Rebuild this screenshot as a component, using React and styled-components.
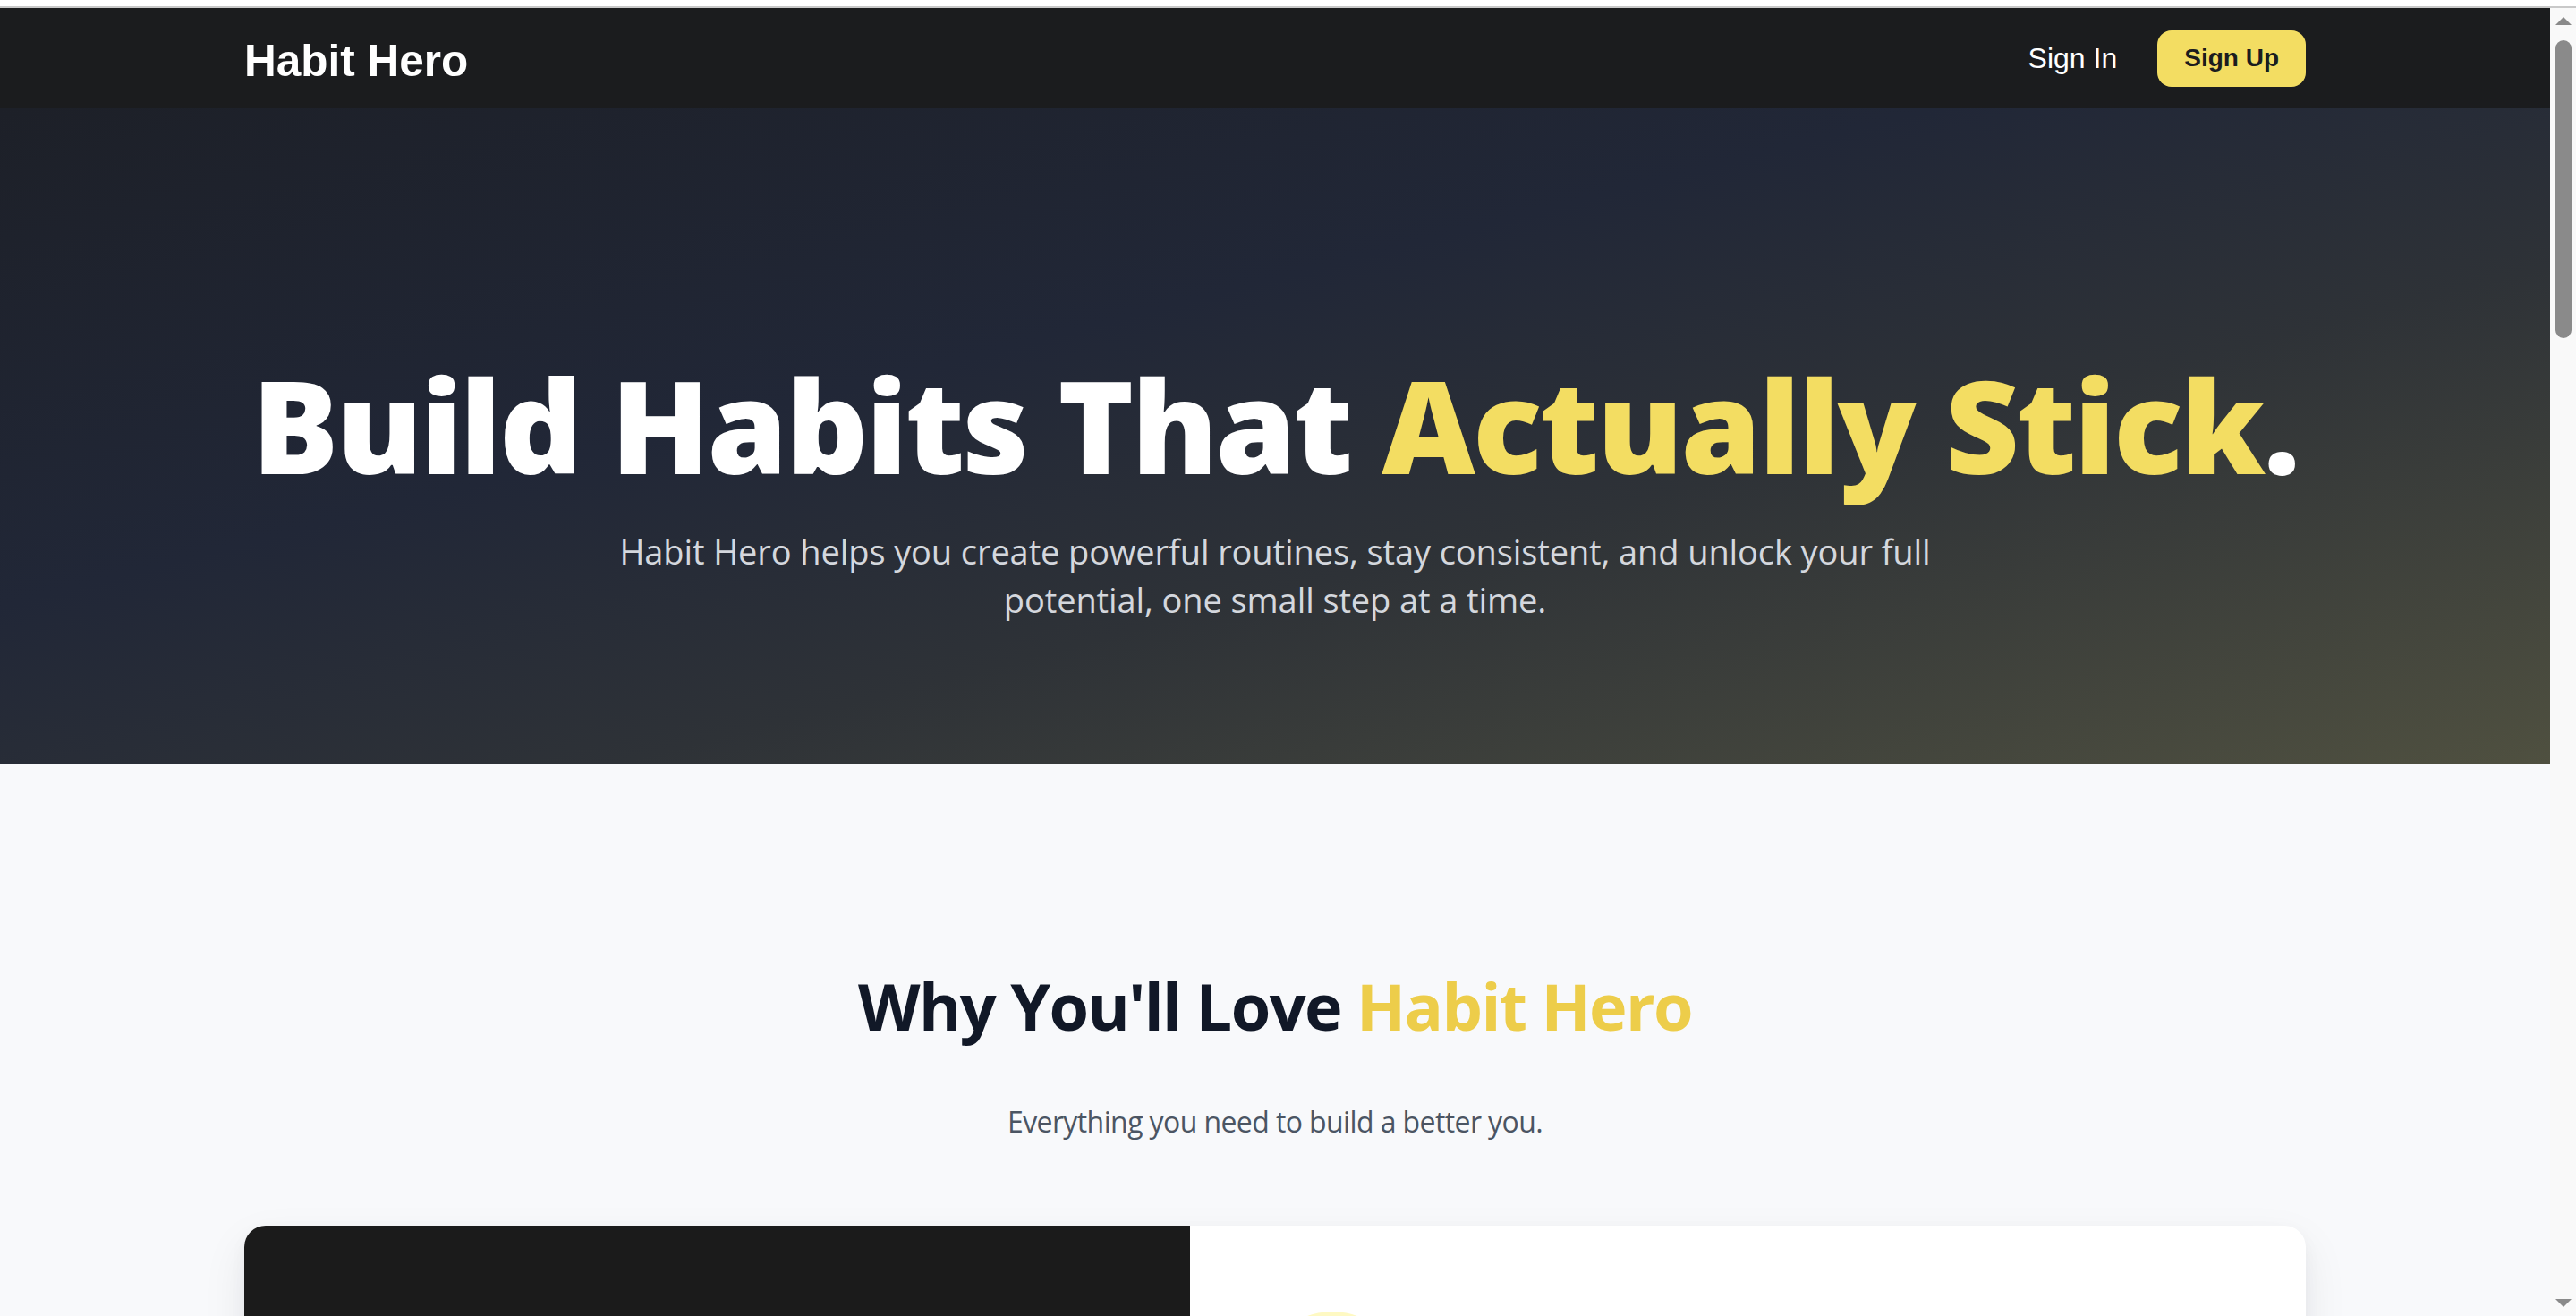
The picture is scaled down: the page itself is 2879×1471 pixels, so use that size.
import React from 'react';
import styled, { createGlobalStyle } from 'styled-components';

const GlobalStyle = createGlobalStyle`
  html, body {
    margin: 0;
    padding: 0;
    background: #f8f9fb;
    overflow: hidden;
  }

  * {
    box-sizing: border-box;
  }
`;

const Screen = styled.div`
  height: 100vh;
  display: flex;
  flex-direction: column;
  border-top: 7px solid #ffffff;
  font-family: "Open Sans", "Noto Sans", sans-serif;
`;

const TopLine = styled.div`
  height: 2px;
  flex: none;
  background: #c9c9c9;
`;

const Viewport = styled.div`
  flex: 1;
  min-height: 0;
  display: grid;
  grid-template-columns: 1fr 29px;
`;

const Main = styled.main`
  overflow: hidden;
  background: #f8f9fb;
`;

// fake browser scrollbar, as in the screenshot
const ScrollRail = styled.div`
  display: flex;
  flex-direction: column;
  align-items: center;
  background: #f9f9f9;
  padding: 10px 0 10px;
`;

const Arrow = styled.div`
  width: 0;
  height: 0;
  border-left: 9px solid transparent;
  border-right: 9px solid transparent;
  ${(p) =>
    p.$down
      ? 'border-top: 9px solid #8a8a8a; margin-top: auto;'
      : 'border-bottom: 9px solid #8a8a8a;'}
`;

const Thumb = styled.div`
  width: 18px;
  height: 333px;
  margin-top: 17px;
  border-radius: 9px;
  background: #8a8a8a;
`;

const Container = styled.div`
  width: 2304px;
  margin: 0 auto;
`;

const Navbar = styled.header`
  height: 112px;
  background: #1b1c1e;
`;

const NavInner = styled(Container)`
  height: 100%;
  display: flex;
  align-items: center;
  justify-content: space-between;
`;

const Logo = styled.div`
  font-family: "Liberation Sans", Arial, sans-serif;
  font-weight: 700;
  font-size: 49.5px;
  color: #ffffff;
  margin-top: 4px;
`;

const NavActions = styled.div`
  display: flex;
  align-items: center;
  gap: 45px;
`;

const NavLink = styled.a`
  font-family: "Liberation Sans", Arial, sans-serif;
  font-size: 32px;
  color: #ffffff;
  text-decoration: none;
`;

const SignUp = styled.button`
  height: 63px;
  padding: 0 30px;
  border: none;
  border-radius: 16px;
  background: #f3dd62;
  color: #1b1c1e;
  font-family: "Liberation Sans", Arial, sans-serif;
  font-weight: 700;
  font-size: 28px;
`;

const Hero = styled.section`
  height: 733px;
  background: linear-gradient(
    to bottom right,
    #1d2028 0%,
    #212737 38%,
    #2e3237 62%,
    #4f5040 100%
  );
  display: flex;
  flex-direction: column;
  align-items: center;
  text-align: center;
  padding-top: 281px;
`;

const HeroTitle = styled.h1`
  margin: 0;
  font-size: 144px;
  font-weight: 800;
  line-height: 1;
  color: #ffffff;
  letter-spacing: -2.6px;
  white-space: nowrap;
`;

const Accent = styled.span`
  color: ${(p) => p.$tone || '#f3dd62'};
`;

const HeroText = styled.p`
  margin: 43px 0 0;
  max-width: 1536px;
  font-size: 38px;
  line-height: 54px;
  letter-spacing: -0.1px;
  color: #d4d7dd;
`;

const Features = styled.section`
  padding: 230px 0 120px;
`;

const SectionTitle = styled.h2`
  margin: 0;
  text-align: center;
  font-size: 72px;
  font-weight: 700;
  line-height: 80px;
  letter-spacing: -1.6px;
  color: #111827;
`;

const SectionText = styled.p`
  margin: 66px 0 0;
  text-align: center;
  font-size: 32px;
  line-height: 48px;
  letter-spacing: -0.6px;
  color: #4b5563;
`;

const FeatureCard = styled(Container)`
  margin-top: 92px;
  display: grid;
  grid-template-columns: 1057px 1fr;
  min-height: 720px;
  border-radius: 24px;
  overflow: hidden;
  background: #ffffff;
  box-shadow: 0 20px 50px rgba(15, 23, 42, 0.08), 0 8px 20px rgba(15, 23, 42, 0.04);
`;

const FeatureMedia = styled.div`
  background: #1b1b1b;
`;

const FeatureBody = styled.div`
  padding: 96px 79px;
`;

const IconBubble = styled.div`
  width: 160px;
  height: 160px;
  border-radius: 50%;
  background: #fef9c3;
`;

export default function App() {
  return (
    <>
      <GlobalStyle />
      <Screen>
        <TopLine />
        <Viewport>
          <Main>
            <Navbar>
              <NavInner>
                <Logo>Habit Hero</Logo>
                <NavActions>
                  <NavLink href="#">Sign In</NavLink>
                  <SignUp>Sign Up</SignUp>
                </NavActions>
              </NavInner>
            </Navbar>
            <Hero>
              <HeroTitle>
                Build Habits That <Accent>Actually Stick</Accent>.
              </HeroTitle>
              <HeroText>
                Habit Hero helps you create powerful routines, stay consistent, and unlock your full
                potential, one small step at a time.
              </HeroText>
            </Hero>
            <Features>
              <SectionTitle>
                Why You'll Love <Accent $tone="#edcd4a">Habit Hero</Accent>
              </SectionTitle>
              <SectionText>Everything you need to build a better you.</SectionText>
              <FeatureCard>
                <FeatureMedia />
                <FeatureBody>
                  <IconBubble />
                </FeatureBody>
              </FeatureCard>
            </Features>
          </Main>
          <ScrollRail>
            <Arrow />
            <Thumb />
            <Arrow $down />
          </ScrollRail>
        </Viewport>
      </Screen>
    </>
  );
}
